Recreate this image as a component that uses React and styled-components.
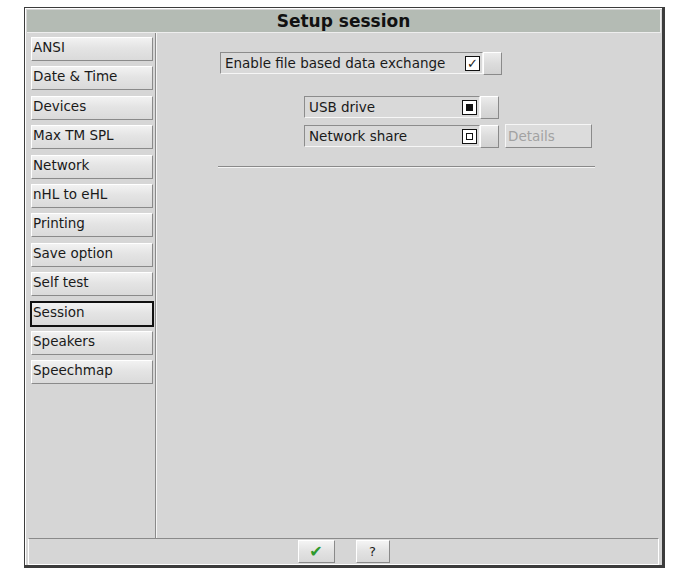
import React from 'react';
import styled, { createGlobalStyle } from 'styled-components';

const GlobalStyle = createGlobalStyle`
    body {
        margin: 0;
        background: #ffffff;
        font-family: "DejaVu Sans", "Liberation Sans", sans-serif;
    }
`;

const Page = styled.div`
    padding: 7px 0 0 24px;
`;

const Window = styled.div`
    background: #d6d6d6;
    border-bottom: 3px solid #3c3c3c;
    border-left: 1px solid #3c3c3c;
    border-right: 3px solid #3c3c3c;
    border-top: 1px solid #3c3c3c;
    box-shadow: inset 1px 1px 0 #ffffff;
    box-sizing: border-box;
    display: flex;
    flex-direction: column;
    height: 561px;
    padding: 2px 1px 0 2px;
    width: 641px;
`;

const TitleBar = styled.div`
    background: #b4bbb4;
    border-bottom: 1px solid #eeeeee;
    border-right: 1px solid #eeeeee;
    color: #111111;
    font-size: 17px;
    font-weight: bold;
    height: 22px;
    line-height: 22px;
    text-align: center;
`;

const Body = styled.div`
    display: flex;
    flex: 1;
`;

const Sidebar = styled.div`
    border-right: 1px solid #8a8a8a;
    box-shadow: 1px 0 0 #f4f4f4;
    display: flex;
    flex-direction: column;
    gap: 5.4px;
    padding: 4px 0 0 4px;
    width: 124px;
`;

const NavButton = styled.div`
    background: linear-gradient(#f2f2f2, #e4e4e4 45%, #dadada);
    border-bottom: 1px solid #8a8a8a;
    border-left: 1px solid #ffffff;
    border-right: 1px solid #8a8a8a;
    border-top: 1px solid #ffffff;
    box-sizing: border-box;
    color: #1a1a1a;
    font-size: 13.5px;
    height: 24px;
    line-height: 19px;
    outline: ${(p) => (p.$active ? '2px solid #111' : 'none')};
    outline-offset: -1px;
    padding-left: 1px;
    width: 122px;
`;

const Main = styled.div`
    display: flex;
    flex: 1;
    flex-direction: column;
    padding-top: 19px;
`;

const Row = styled.div`
    align-items: flex-start;
    display: flex;
    margin-bottom: ${(p) => p.$gap || 0}px;
    padding-left: ${(p) => p.$indent}px;
`;

const Field = styled.div`
    align-items: center;
    background: #d9d9d9;
    border-bottom: 1px solid #f6f6f6;
    border-left: 1px solid #8c8c8c;
    border-right: 1px solid #f6f6f6;
    border-top: 1px solid #8c8c8c;
    box-sizing: border-box;
    color: #1a1a1a;
    display: flex;
    font-size: 13.5px;
    height: 22px;
    justify-content: space-between;
    padding: 0 2px 0 4px;
    width: ${(p) => p.$width}px;
`;

const Indicator = styled.div`
    align-items: center;
    background: #ffffff;
    border: 1.5px solid #111111;
    box-sizing: border-box;
    display: flex;
    font-size: 13px;
    font-weight: bold;
    height: 15px;
    justify-content: center;
    line-height: 1;
    width: 15px;
`;

const Dot = styled.div`
    background: ${(p) => (p.$filled ? '#111111' : '#ffffff')};
    border: 1px solid #111111;
    box-sizing: border-box;
    height: 7px;
    width: 7px;
`;

const SmallButton = styled.div`
    background: linear-gradient(#ececec, #dcdcdc 50%, #d2d2d2);
    border-bottom: 1px solid #8a8a8a;
    border-left: 1px solid #ffffff;
    border-right: 1px solid #8a8a8a;
    border-top: 1px solid #ffffff;
    box-sizing: border-box;
    height: 23px;
    width: 19px;
`;

const DetailsButton = styled.div`
    background: #dcdcdc;
    border-bottom: 1px solid #8a8a8a;
    border-left: 1px solid #f6f6f6;
    border-right: 1px solid #8a8a8a;
    border-top: 1px solid #f6f6f6;
    box-sizing: border-box;
    color: #a2a2a2;
    font-size: 13.5px;
    height: 24px;
    line-height: 22px;
    margin-left: 6px;
    margin-top: -1px;
    padding-left: 2px;
    width: 87px;
`;

const Divider = styled.div`
    border-top: 1px solid #8a8a8a;
    box-shadow: 0 1px 0 #f4f4f4;
    margin: 18px 0 0 62px;
    width: 377px;
`;

const Footer = styled.div`
    align-items: center;
    border-bottom: 1px solid #ffffff;
    border-left: 1px solid #ffffff;
    border-right: 1px solid #ffffff;
    border-top: 1px solid #8a8a8a;
    box-sizing: border-box;
    display: flex;
    gap: 21px;
    height: 27px;
    justify-content: center;
    margin: 0 2px 0 1px;
`;

const FooterButton = styled.div`
    align-items: center;
    background: linear-gradient(#f4f4f4, #e2e2e2 50%, #d8d8d8);
    border-bottom: 1px solid #8a8a8a;
    border-left: 1px solid #ffffff;
    border-right: 1px solid #8a8a8a;
    border-top: 1px solid #ffffff;
    box-sizing: border-box;
    color: ${(p) => p.$color || '#1a1a1a'};
    display: flex;
    font-size: ${(p) => p.$size || 13}px;
    height: 23px;
    justify-content: center;
    width: ${(p) => p.$width}px;
`;

const navItems = [
    'ANSI',
    'Date & Time',
    'Devices',
    'Max TM SPL',
    'Network',
    'nHL to eHL',
    'Printing',
    'Save option',
    'Self test',
    'Session',
    'Speakers',
    'Speechmap',
];

const App = () => {
    return (
        <Page>
            <GlobalStyle />
            <Window>
                <TitleBar>Setup session</TitleBar>
                <Body>
                    <Sidebar>
                        {navItems.map((label) => (
                            <NavButton key={label} $active={label === 'Session'}>
                                {label}
                            </NavButton>
                        ))}
                    </Sidebar>
                    <Main>
                        <Row $indent={64} $gap={21}>
                            <Field $width={263}>
                                Enable file based data exchange
                                <Indicator>✓</Indicator>
                            </Field>
                            <SmallButton />
                        </Row>
                        <Row $indent={148} $gap={6}>
                            <Field $width={176}>
                                USB drive
                                <Indicator><Dot $filled /></Indicator>
                            </Field>
                            <SmallButton />
                        </Row>
                        <Row $indent={148}>
                            <Field $width={176}>
                                Network share
                                <Indicator><Dot /></Indicator>
                            </Field>
                            <SmallButton />
                            <DetailsButton>Details</DetailsButton>
                        </Row>
                        <Divider />
                    </Main>
                </Body>
                <Footer>
                    <FooterButton $width={37} $color="#2e9a2e" $size={16}>✔</FooterButton>
                    <FooterButton $width={34}>?</FooterButton>
                </Footer>
            </Window>
        </Page>
    );
};

export default App;
